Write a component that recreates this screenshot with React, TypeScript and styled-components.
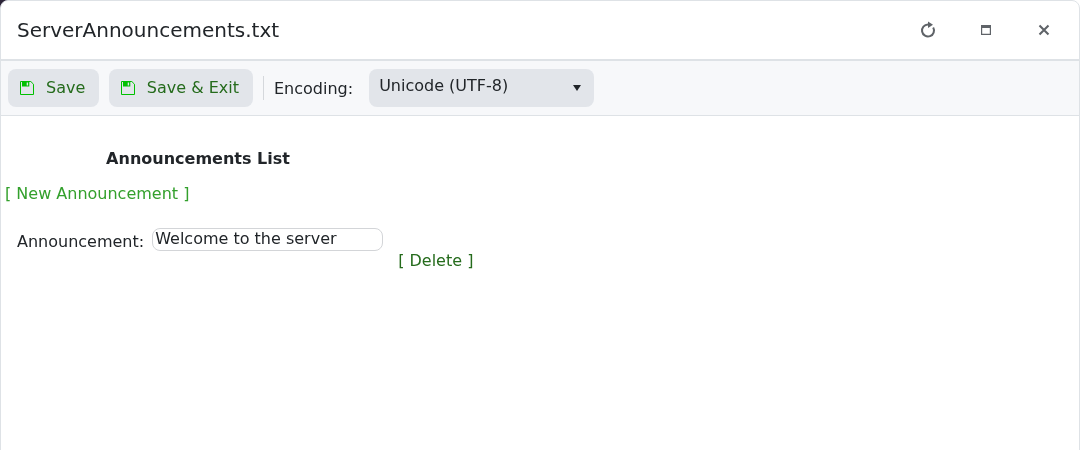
import styled, { createGlobalStyle } from 'styled-components';

const GlobalStyle = createGlobalStyle`
  html, body {
    margin: 0;
    height: 100%;
    background: linear-gradient(90deg, #2c2438 0, #2c2438 20px, #ffffff 20px);
    font-family: "DejaVu Sans", sans-serif;
    overflow: hidden;
  }
  #root {
    height: 100%;
  }
`;

// the dialog sits on its own layer, text comes out with grey antialiasing
const Window = styled.div`
  box-sizing: border-box;
  height: 470px;
  background: #fff;
  border: 1px solid #dee2e6;
  border-radius: 8px 8px 0 0;
  color: #212529;
  will-change: transform;
`;

const TitleBar = styled.header`
  box-sizing: border-box;
  height: 58px;
  display: flex;
  align-items: center;
  justify-content: space-between;
  padding: 0 16px;
`;

const Title = styled.h1`
  margin: 0;
  font-size: 20px;
  font-weight: 400;
`;

const WindowActions = styled.div`
  display: flex;
  align-items: center;
  gap: 34px;
  margin-right: 8px;
`;

const ActionIcon = styled.svg`
  display: block;
  width: 24px;
  height: 24px;
  fill: none;
  stroke: #5f6368;
`;

const Toolbar = styled.div`
  box-sizing: border-box;
  height: 57px;
  display: flex;
  align-items: center;
  padding: 0 7px;
  background: #f7f8fa;
  border-top: 2px solid #dee2e6;
  border-bottom: 1px solid #dee2e6;
`;

const ToolButton = styled.button`
  box-sizing: border-box;
  height: 38px;
  display: flex;
  align-items: center;
  gap: 12px;
  margin-right: 10px;
  padding: 0 13.5px 1px 12px;
  border: 0;
  border-radius: 8px;
  background: #e2e5ea;
  color: #256b1c;
  font: 400 16px "DejaVu Sans", sans-serif;
`;

const Divider = styled.span`
  width: 1px;
  height: 24px;
  background: #d5d8dc;
`;

const EncodingLabel = styled.label`
  margin: 0 15.5px 0 10.5px;
  font-size: 16px;
`;

const EncodingSelect = styled.div`
  box-sizing: border-box;
  width: 225px;
  height: 38px;
  display: flex;
  align-items: center;
  justify-content: space-between;
  padding: 0 12px 5px 10.5px;
  border-radius: 8px;
  background: #e2e5ea;
  font-size: 16px;
`;

const Caret = styled.svg`
  width: 10px;
  height: 6px;
  margin-top: 5px;
  fill: #212529;
`;

const Content = styled.main`
  padding: 33px 4px 0;
`;

const ListHeading = styled.div`
  width: 386px;
  text-align: center;
  font-size: 16px;
  line-height: 20px;
  font-weight: 700;
`;

const NewLink = styled.a`
  display: block;
  margin-top: 15px;
  font-size: 16px;
  line-height: 20px;
  color: #33a02c;
`;

const Row = styled.div`
  display: flex;
  align-items: flex-start;
  margin-top: 24px;
  padding-left: 12px;
`;

const FieldLabel = styled.span`
  margin-top: 4px;
  font-size: 16px;
  line-height: 20px;
`;

const FieldInput = styled.div`
  box-sizing: border-box;
  width: 231px;
  height: 23px;
  margin-left: 8px;
  padding-left: 2px;
  border: 1px solid #d3d5d8;
  border-radius: 8px;
  font-size: 16px;
  line-height: 20px;
`;

const DeleteLink = styled.a`
  margin: 23px 0 0 15px;
  font-size: 16px;
  line-height: 20px;
  color: #256b1c;
`;

const SaveIcon = () => (
  <svg width="14" height="14" viewBox="0 0 14 14" fill="none">
    <path d="M.5.5h10.3l2.7 2.7v10.3H.5z" stroke="#00c000" />
    <path d="M2 1h7.3v4.5H2z" fill="#00c000" />
    <path d="M6.7 1.5h1.4v3H6.7z" fill="#e2e5ea" />
  </svg>
);

const App = () => (
  <>
    <GlobalStyle />
    <Window>
      <TitleBar>
        <Title>ServerAnnouncements.txt</Title>
        <WindowActions>
          <ActionIcon viewBox="0 0 24 24" strokeWidth="2">
            <path d="M13 6.5a6 6 0 1 0 5.2 3" />
            <path d="M13 3.4l5 3.4-5 3.3z" fill="#5f6368" stroke="none" />
          </ActionIcon>
          <ActionIcon viewBox="0 0 24 24" strokeWidth="1.2">
            <path d="M8.6 7.6h8.8v8.8H8.6z" />
            <path d="M8 7h10v3H8z" fill="#5f6368" stroke="none" />
          </ActionIcon>
          <ActionIcon viewBox="0 0 24 24" strokeWidth="2.1">
            <path d="M8.5 7.5l9 9M17.5 7.5l-9 9" />
          </ActionIcon>
        </WindowActions>
      </TitleBar>
      <Toolbar>
        <ToolButton>
          <SaveIcon />
          Save
        </ToolButton>
        <ToolButton>
          <SaveIcon />
          Save &amp; Exit
        </ToolButton>
        <Divider />
        <EncodingLabel>Encoding:</EncodingLabel>
        <EncodingSelect>
          Unicode (UTF-8)
          <Caret viewBox="0 0 10 6">
            <path d="M1 0h8L5 6z" />
          </Caret>
        </EncodingSelect>
      </Toolbar>
      <Content>
        <ListHeading>Announcements List</ListHeading>
        <NewLink>[ New Announcement ]</NewLink>
        <Row>
          <FieldLabel>Announcement:</FieldLabel>
          <FieldInput>Welcome to the server</FieldInput>
          <DeleteLink>[ Delete ]</DeleteLink>
        </Row>
      </Content>
    </Window>
  </>
);

export default App;
